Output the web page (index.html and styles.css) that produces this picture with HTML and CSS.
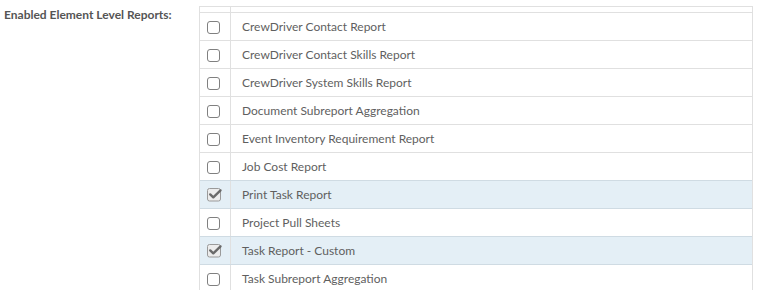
FILE: index.html
```html
<!DOCTYPE html>
<html>
<head>
<meta charset="utf-8">
<link rel="stylesheet" href="styles.css">
</head>
<body>
<div class="field">
  <div class="label">Enabled Element Level Reports:</div>
  <div class="grid">
    <div class="row head"><div class="c1"></div><div class="c2"></div></div>
    <div class="row"><div class="c1"><span class="box"></span></div><div class="c2">CrewDriver Contact Report</div></div>
    <div class="row"><div class="c1"><span class="box"></span></div><div class="c2">CrewDriver Contact Skills Report</div></div>
    <div class="row"><div class="c1"><span class="box"></span></div><div class="c2">CrewDriver System Skills Report</div></div>
    <div class="row"><div class="c1"><span class="box"></span></div><div class="c2">Document Subreport Aggregation</div></div>
    <div class="row"><div class="c1"><span class="box"></span></div><div class="c2">Event Inventory Requirement Report</div></div>
    <div class="row"><div class="c1"><span class="box"></span></div><div class="c2">Job Cost Report</div></div>
    <div class="row sel"><div class="c1"><svg class="chk" width="16" height="15" viewBox="0 0 16 15"><rect x="0.5" y="1.5" width="13" height="12.5" rx="2" fill="#ececec" stroke="#9a9a9a"/><path d="M3.2 7.4 L6.3 10.3 L13.5 3.4" fill="none" stroke="#6a6a6a" stroke-width="2.4" stroke-linecap="round" stroke-linejoin="round"/></svg></div><div class="c2">Print Task Report</div></div>
    <div class="row"><div class="c1"><span class="box"></span></div><div class="c2">Project Pull Sheets</div></div>
    <div class="row sel"><div class="c1"><svg class="chk" width="16" height="15" viewBox="0 0 16 15"><rect x="0.5" y="1.5" width="13" height="12.5" rx="2" fill="#ececec" stroke="#9a9a9a"/><path d="M3.2 7.4 L6.3 10.3 L13.5 3.4" fill="none" stroke="#6a6a6a" stroke-width="2.4" stroke-linecap="round" stroke-linejoin="round"/></svg></div><div class="c2">Task Report - Custom</div></div>
    <div class="row"><div class="c1"><span class="box"></span></div><div class="c2">Task Subreport Aggregation</div></div>
  </div>
</div>
</body>
</html>
```
FILE: styles.css
```css
html, body {
  margin: 0;
  padding: 0;
  background: #fff;
  font-family: Lato, "Noto Sans", sans-serif;
  font-size: 12px;
  color: #5f5f5f;
}
.field {
  display: flex;
  align-items: flex-start;
}
.label {
  width: 195px;
  padding-left: 4px;
  padding-top: 7px;
  line-height: 15px;
  font-weight: bold;
  color: #555;
}
.grid {
  margin-top: 6px;
  width: 552px;
  border: 1px solid #e0e0e0;
  border-bottom: none;
}
.row {
  display: flex;
  height: 27px;
  border-top: 1px solid #e0e0e0;
}
.row.head {
  height: 5px;
  border-top: none;
}
.row.sel {
  background: #e4eff6;
  border-top-color: #cfdbe3;
}
.row.sel + .row {
  border-top-color: #cfdbe3;
}
.c1 {
  width: 31px;
  border-right: 1px solid #e0e0e0;
  display: flex;
  align-items: center;
  padding-left: 7px;
  box-sizing: border-box;
  flex: none;
}
.c2 {
  display: flex;
  align-items: center;
  padding-left: 11px;
  white-space: nowrap;
}
.box {
  display: block;
  width: 13px;
  height: 13px;
  box-sizing: border-box;
  border: 1px solid #808080;
  border-radius: 3px;
  background: #fff;
  margin-top: 1px;
}
.chk {
  display: block;
  margin-top: -1px;
}
```
